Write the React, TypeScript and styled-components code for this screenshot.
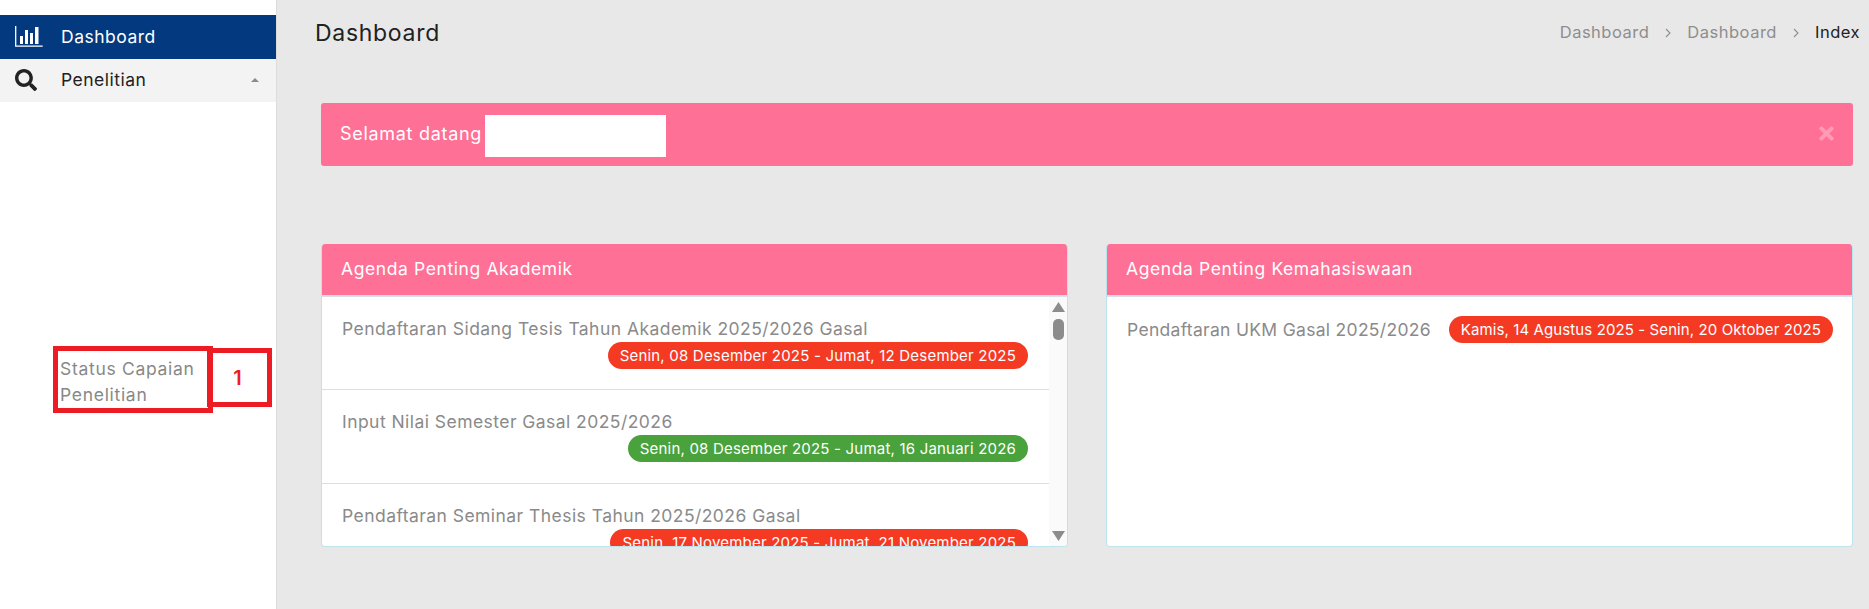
import React from "react";
import styled, { createGlobalStyle } from "styled-components";
import { FaSearch, FaTimes } from "react-icons/fa";

const Global = createGlobalStyle`
  html, body { margin: 0; padding: 0; height: 100%; overflow: hidden; }
  body { font-family: Inter, "Open Sans", sans-serif; background: #e8e8e8; color: #212121; }
  * { box-sizing: border-box; }
`;

const Page = styled.div`
  display: flex;
  width: 1869px;
  height: 609px;
  overflow: hidden;
`;

const Sidebar = styled.aside`
  position: relative;
  width: 277px;
  flex: none;
  background: #fff;
  border-right: 1px solid #dcdcdc;
  padding-top: 15px;
`;

const MenuItem = styled.div<{ $active?: boolean }>`
  height: ${(p) => (p.$active ? 44 : 43)}px;
  display: flex;
  align-items: center;
  padding: 0 17px 2px 15px;
  background: ${(p) => (p.$active ? "#03397f" : "#f3f3f3")};
  color: ${(p) => (p.$active ? "#fff" : "#212121")};
  font-size: 17.5px;
  letter-spacing: 0.5px;
`;

const MenuIcon = styled.span`
  width: 46px;
  flex: none;
  display: flex;
  align-items: center;
`;

const MenuLabel = styled.span`
  flex: 1;
`;

const SubItem = styled.div`
  width: 146px;
  margin: 254px 0 0 60px;
  font-size: 17.5px;
  letter-spacing: 0.7px;
  line-height: 26px;
  color: #888;
`;

const AnnotationBox = styled.div<{ $l: number; $t: number; $w: number; $h: number }>`
  position: absolute;
  left: ${(p) => p.$l}px;
  top: ${(p) => p.$t}px;
  width: ${(p) => p.$w}px;
  height: ${(p) => p.$h}px;
  border: 5px solid #ed1c24;
  color: #ed1c24;
  font-size: 20px;
  font-weight: 600;
  display: flex;
  align-items: center;
  justify-content: center;
  padding-right: 4px;
`;

const Main = styled.main`
  flex: 1;
  min-width: 0;
  padding: 0 16px 0 44px;
`;

const TopRow = styled.header`
  height: 103px;
  display: flex;
  justify-content: space-between;
  padding: 19px 0 0;
  margin-left: -6px;
  margin-right: -7px;
`;

const Title = styled.h1`
  margin: 0;
  font-size: 23px;
  letter-spacing: 0.7px;
  line-height: 28px;
  font-weight: 400;
  color: #212121;
`;

const Breadcrumb = styled.nav`
  display: flex;
  align-items: center;
  height: 28px;
  margin-top: -1px;
  font-size: 16.5px;
  letter-spacing: 0.5px;
  color: #8e8e8e;
`;

const Sep = styled.svg`
  margin: 1px 16px 0;
`;

const Current = styled.span`
  color: #212121;
`;

const Alert = styled.div`
  height: 63px;
  border-radius: 3px;
  background: #ff7096;
  color: #fff;
  display: flex;
  align-items: center;
  padding: 0 16px 2px 19px;
  font-size: 18px;
  letter-spacing: 0.7px;
`;

const Redaction = styled.span`
  width: 181px;
  height: 42px;
  background: #fff;
  margin: 4px 0 0 3px;
`;

const Close = styled.span`
  margin-left: auto;
  color: #ff9bb6;
  display: flex;
  font-size: 21px;
`;

const Cards = styled.section`
  display: grid;
  grid-template-columns: 747px 747px;
  column-gap: 38px;
  margin-top: 78px;
`;

const Card = styled.article`
  height: 303px;
  background: #fff;
  border: 1px solid #bde4ec;
  border-top-width: 0;
  border-radius: 4px;
  overflow: hidden;
  display: flex;
  flex-direction: column;
`;

const CardHead = styled.div`
  height: 53px;
  flex: none;
  background: #ff7096;
  border-bottom: 2px solid #d5e0e4;
  color: #fff;
  font-size: 17.5px;
  letter-spacing: 0.6px;
  padding: 0 20px 2px;
  display: flex;
  align-items: center;
  margin: 0 -1px;
`;

const CardBody = styled.div`
  flex: 1;
  min-height: 0;
  display: flex;
  overflow: hidden;
`;

const List = styled.div`
  flex: 1;
  min-width: 0;
`;

const Row = styled.div`
  height: 94px;
  padding: 20px 21px 0 20px;
  border-bottom: 1px solid #dedede;
  &:first-child { height: 93px; }
`;

const RowTitle = styled.div<{ $tight?: boolean }>`
  font-size: 17.5px;
  letter-spacing: ${(p) => (p.$tight ? 0.3 : 0.45)}px;
  line-height: 24px;
  color: #8a8a8a;
  white-space: nowrap;
`;

const Pill = styled.span<{ $green?: boolean; $tight?: boolean }>`
  display: inline-block;
  height: 27px;
  line-height: 27px;
  padding: 0 12px;
  border-radius: 14px;
  background: ${(p) => (p.$green ? "#4aa23c" : "#f53a24")};
  color: #fff;
  font-size: 15px;
  letter-spacing: ${(p) => (p.$tight ? 0.1 : 0.2)}px;
  white-space: nowrap;
`;

const PillRow = styled.div`
  display: flex;
  justify-content: flex-end;
  margin-top: 1px;
`;

const Scroll = styled.div`
  width: 18px;
  flex: none;
  background: #fafafa;
  display: flex;
  flex-direction: column;
  align-items: center;
  padding-top: 5px;
`;

const Thumb = styled.div`
  width: 11px;
  height: 21px;
  margin-top: 7px;
  border-radius: 5px;
  background: #8c8c8c;
`;

const ArrowDown = styled.svg`
  margin-top: auto;
  margin-bottom: 5px;
`;

const RowInline = styled.div`
  display: flex;
  align-items: center;
  justify-content: space-between;
  padding: 19px 19px 0 20px;
`;

const Bars = () => (
  <svg width="28" height="21" viewBox="0 0 28 21" fill="none">
    <path d="M.7 0v20.2h27" stroke="#fff" strokeWidth="1.3" />
    <path fill="#fff" d="M5 10h3v8H5zM10 4h3v14h-3zM15 7h3v11h-3zM20 1h3.5v17H20z" />
  </svg>
);

const Chevron = () => (
  <Sep width="6" height="10" viewBox="0 0 6 10" fill="none">
    <path d="M1 1l4 4-4 4" stroke="#8e8e8e" strokeWidth="1.1" />
  </Sep>
);

export default function App() {
  return (
    <Page>
      <Global />
      <Sidebar>
        <MenuItem $active>
          <MenuIcon><Bars /></MenuIcon>
          <MenuLabel>Dashboard</MenuLabel>
        </MenuItem>
        <MenuItem>
          <MenuIcon><FaSearch size={22} color="#222" /></MenuIcon>
          <MenuLabel>Penelitian</MenuLabel>
          <svg width="8" height="4" viewBox="0 0 8 4"><path d="M4 0l4 4H0z" fill="#8a8a8a" /></svg>
        </MenuItem>
        <SubItem>Status Capaian Penelitian</SubItem>
        <AnnotationBox $l={53} $t={346} $w={160} $h={67} />
        <AnnotationBox $l={207} $t={348} $w={65} $h={59}>1</AnnotationBox>
      </Sidebar>
      <Main>
        <TopRow>
          <Title>Dashboard</Title>
          <Breadcrumb>
            <span>Dashboard</span>
            <Chevron />
            <span>Dashboard</span>
            <Chevron />
            <Current>Index</Current>
          </Breadcrumb>
        </TopRow>
        <Alert>
          Selamat datang
          <Redaction />
          <Close><FaTimes /></Close>
        </Alert>
        <Cards>
          <Card>
            <CardHead>Agenda Penting Akademik</CardHead>
            <CardBody>
              <List>
                <Row>
                  <RowTitle>Pendaftaran Sidang Tesis Tahun Akademik 2025/2026 Gasal</RowTitle>
                  <PillRow><Pill>Senin, 08 Desember 2025 - Jumat, 12 Desember 2025</Pill></PillRow>
                </Row>
                <Row>
                  <RowTitle>Input Nilai Semester Gasal 2025/2026</RowTitle>
                  <PillRow><Pill $green>Senin, 08 Desember 2025 - Jumat, 16 Januari 2026</Pill></PillRow>
                </Row>
                <Row>
                  <RowTitle>Pendaftaran Seminar Thesis Tahun 2025/2026 Gasal</RowTitle>
                  <PillRow><Pill>Senin, 17 November 2025 - Jumat, 21 November 2025</Pill></PillRow>
                </Row>
              </List>
              <Scroll>
                <svg width="13" height="10" viewBox="0 0 13 10"><path d="M6.5 0l6.5 10H0z" fill="#8c8c8c" /></svg>
                <Thumb />
                <ArrowDown width="13" height="10" viewBox="0 0 13 10"><path d="M6.5 10L13 0H0z" fill="#8c8c8c" /></ArrowDown>
              </Scroll>
            </CardBody>
          </Card>
          <Card>
            <CardHead>Agenda Penting Kemahasiswaan</CardHead>
            <CardBody>
              <List>
                <RowInline>
                  <RowTitle $tight>Pendaftaran UKM Gasal 2025/2026</RowTitle>
                  <Pill $tight>Kamis, 14 Agustus 2025 - Senin, 20 Oktober 2025</Pill>
                </RowInline>
              </List>
            </CardBody>
          </Card>
        </Cards>
      </Main>
    </Page>
  );
}
